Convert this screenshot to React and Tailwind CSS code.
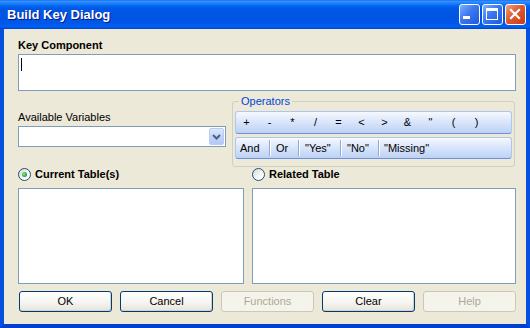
import React from 'react';

const OPS = ['+', '-', '*', '/', '=', '<', '>', '&', '"', '(', ')'];

function TitleButton({ kind }) {
  const bg =
    kind === 'close'
      ? 'bg-[linear-gradient(135deg,#F0A080,#DD5A30_45%,#C83C14)]'
      : 'bg-[linear-gradient(135deg,#7BB0FF,#3A78F0_45%,#2058DC)]';
  return (
    <div className={`w-[21px] h-[21px] rounded-[3px] border border-white ${bg}`}>
      <svg width="19" height="19" viewBox="0 0 19 19">
        {kind === 'min' && <rect x="3" y="11" width="7" height="3" fill="white" />}
        {kind === 'max' && (
          <>
            <rect x="3.5" y="3.5" width="11" height="11" fill="none" stroke="white" strokeWidth="1" />
            <rect x="3" y="3" width="12" height="3" fill="white" />
          </>
        )}
        {kind === 'close' && (
          <path d="M5 5L13 13M13 5L5 13" stroke="white" strokeWidth="2.2" strokeLinecap="square" />
        )}
      </svg>
    </div>
  );
}

function XpButton({ children, disabled }) {
  return (
    <div
      className={
        disabled
          ? 'w-[93px] h-[21px] rounded-[3px] border border-[#CBC8BA] bg-[#F5F4EA] flex items-center justify-center text-[11px] text-[#ACA899]'
          : 'w-[93px] h-[21px] rounded-[3px] border border-[#003C74] bg-[linear-gradient(to_bottom,#FFFFFF,#F5F5F1_55%,#E6E3DA)] shadow-[inset_-1px_-1px_0_#D6D0C5] flex items-center justify-center text-[11px] text-black'
      }
    >
      {children}
    </div>
  );
}

function Radio({ checked, label }) {
  return (
    <div className="flex items-center h-[14px]">
      <span className="w-[13px] h-[13px] rounded-full border border-[#1C5180] bg-[linear-gradient(135deg,#D8D8D2,#FFFFFF_75%)] flex items-center justify-center">
        {checked && (
          <span className="w-[5px] h-[5px] rounded-full bg-[radial-gradient(circle_at_40%_40%,#9BE89B,#21A121_65%)]" />
        )}
      </span>
      <span className="ml-[4px] text-[11px] leading-[14px] font-bold text-black">{label}</span>
    </div>
  );
}

function Sep() {
  return <div className="w-px h-[16px] bg-[#96A8CC] shadow-[1px_0_0_#FFFFFF]" />;
}

const barCls =
  'rounded-[3px] border border-[#AEC5EF] border-b-[#6F90D6] bg-[linear-gradient(to_bottom,#F6F9FE,#DDE8FB_40%,#BDD2F6)] flex items-center text-[11px] text-black';

export default function App() {
  return (
    <div className="w-[530px] h-[328px] flex flex-col font-['Liberation_Sans',Arial,sans-serif] select-none">
      {/* title bar */}
      <div className="h-[29px] flex items-center pl-[7px] pr-[4px] bg-[linear-gradient(to_bottom,#0A5FEA_0px,#3D95FF_1px,#2B8BFF_2px,#137BFB_4px,#0465EF_6px,#0057E6_9px,#0054E2_18px,#0058EA_24px,#0062F5_26px,#0052E2_28px,#003FD2_29px)]">
        <span className="text-[13px] font-bold text-white [text-shadow:1px_1px_0_#0A1883]">Build Key Dialog</span>
        <div className="ml-auto flex gap-[2px]">
          <TitleButton kind="min" />
          <TitleButton kind="max" />
          <TitleButton kind="close" />
        </div>
      </div>

      {/* body */}
      <div className="flex-1 flex flex-col bg-[#ECE9D8] border-x-4 border-b-4 border-x-[#0650DF] border-b-[#0440D0] pl-[14px] pr-[10px]">
        <div className="mt-[9px] h-[14px] leading-[14px] text-[11px] font-bold text-black">Key Component</div>
        <div className="mt-[2px] h-[37px] border border-[#7F9DB9] bg-white pl-[2px] pt-[3px]">
          <div className="w-px h-[13px] bg-black" />
        </div>

        <div className="mt-[4px] h-[72px] flex">
          <div className="w-[208px] pt-[15px]">
            <div className="h-[14px] leading-[14px] text-[11px] text-black">Available Variables</div>
            <div className="mt-[2px] h-[21px] border border-[#7F9DB9] bg-white flex justify-end items-center pr-px">
              <div className="w-[15px] h-[17px] rounded-[2px] border border-[#B8CBF5] bg-[linear-gradient(to_bottom,#DCE7FC,#C3D4F8_50%,#B2C8F6)] flex items-center justify-center">
                <svg width="9" height="6" viewBox="0 0 9 6">
                  <path d="M1 1L4.5 4.5L8 1" fill="none" stroke="#4D6185" strokeWidth="2" />
                </svg>
              </div>
            </div>
          </div>

          <fieldset className="ml-[6px] mr-px flex-1 rounded-[3px] border border-[#D0D0BF] px-[2px] pt-[4px]">
            <legend className="ml-[4px] px-[2px] h-[12px] leading-[12px] text-[11px] text-[#0046D5]">Operators</legend>
            <div className={`h-[23px] ${barCls}`}>
              {OPS.map((o, i) => (
                <span key={i} className={`w-[23px] text-center ${i === 0 ? '-ml-px' : ''}`}>
                  {o}
                </span>
              ))}
            </div>
            <div className={`mt-[3px] h-[22px] ${barCls}`}>
              <span className="w-[33px] pl-[4px]">And</span>
              <Sep />
              <span className="w-[28px] pl-[6px]">Or</span>
              <Sep />
              <span className="w-[41px] pl-[6px]">"Yes"</span>
              <Sep />
              <span className="w-[37px] pl-[6px]">"No"</span>
              <Sep />
              <span className="pl-[5px]">"Missing"</span>
            </div>
          </fieldset>
        </div>

        <div className="flex">
          <div className="w-[234px]">
            <Radio checked label="Current Table(s)" />
          </div>
          <Radio label="Related Table" />
        </div>

        <div className="mt-[7px] h-[96px] flex gap-[8px]">
          <div className="w-[226px] border border-[#7F9DB9] bg-white" />
          <div className="flex-1 border border-[#7F9DB9] bg-white" />
        </div>

        <div className="mt-[7px] ml-px flex gap-[8px]">
          <XpButton>OK</XpButton>
          <XpButton>Cancel</XpButton>
          <XpButton disabled>Functions</XpButton>
          <XpButton>Clear</XpButton>
          <XpButton disabled>Help</XpButton>
        </div>
      </div>
    </div>
  );
}
